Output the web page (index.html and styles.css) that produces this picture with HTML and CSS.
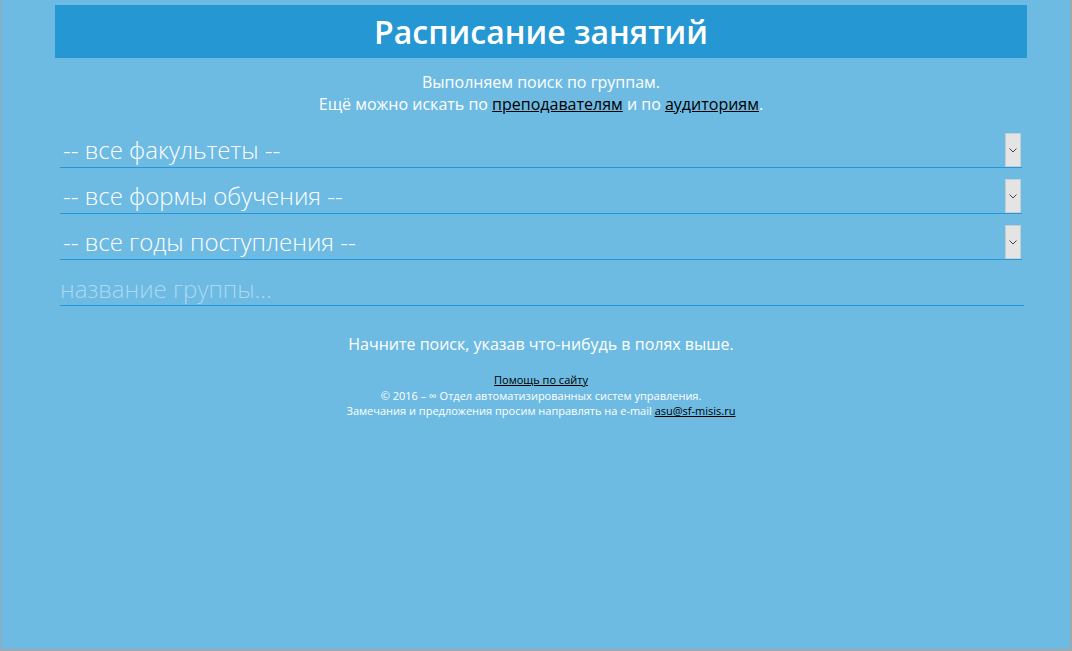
FILE: index.html
```html
<!DOCTYPE html>
<html lang="ru">
<head>
<meta charset="utf-8">
<title>Расписание занятий</title>
<link rel="stylesheet" href="styles.css">
</head>
<body>
<div class="frame">
  <div class="page">
    <header class="header"><h1>Расписание занятий</h1></header>
    <p class="intro">Выполняем поиск по группам.<br>Ещё можно искать по <a href="#">преподавателям</a> и по <a href="#">аудиториям</a>.</p>
    <div class="form">
      <div class="field"><span class="value">-- все факультеты --</span><span class="btn"><svg width="8" height="5" viewBox="0 0 8 5"><path d="M0.5 0.5 L4 4 L7.5 0.5" fill="none" stroke="#444" stroke-width="1"/></svg></span></div>
      <div class="field"><span class="value">-- все формы обучения --</span><span class="btn"><svg width="8" height="5" viewBox="0 0 8 5"><path d="M0.5 0.5 L4 4 L7.5 0.5" fill="none" stroke="#444" stroke-width="1"/></svg></span></div>
      <div class="field"><span class="value">-- все годы поступления --</span><span class="btn"><svg width="8" height="5" viewBox="0 0 8 5"><path d="M0.5 0.5 L4 4 L7.5 0.5" fill="none" stroke="#444" stroke-width="1"/></svg></span></div>
      <div class="field field-input"><span class="placeholder">название группы...</span></div>
    </div>
    <p class="hint">Начните поиск, указав что-нибудь в полях выше.</p>
    <footer class="footer">
      <a href="#">Помощь по сайту</a><br>
      © 2016 – ∞ Отдел автоматизированных систем управления.<br>
      Замечания и предложения просим направлять на e-mail <a href="#">asu@sf-misis.ru</a>
    </footer>
  </div>
</div>
</body>
</html>
```
FILE: styles.css
```css
html, body {
  margin: 0;
  padding: 0;
  height: 100%;
}
body {
  background: #6dbbe3;
  font-family: "Open Sans", "Noto Sans", sans-serif;
  color: #fff;
}
.frame {
  box-sizing: border-box;
  height: 651px;
  border-left: 1px solid #9fa8ae;
  border-right: 2px solid #9fa8ae;
  border-bottom: 2px solid #9fa8ae;
}
.page {
  padding: 5px 43px 0 54px;
}
.header {
  background: #2598d4;
  height: 53px;
  display: flex;
  align-items: center;
  justify-content: center;
}
.header h1 {
  margin: 0;
  font-size: 32px;
  font-weight: 600;
  color: #fff;
  line-height: 1;
  padding-top: 1px;
}
.intro {
  margin: 13px 0 0;
  text-align: center;
  font-size: 16px;
  line-height: 22px;
}
.intro a, .footer a {
  color: #000;
  text-decoration: underline;
}
.form {
  margin: 7px 5px 0 5px;
}
.field {
  display: flex;
  align-items: flex-end;
  justify-content: space-between;
  height: 45px;
  border-bottom: 1px solid #2396dc;
}
.value {
  font-size: 24px;
  font-weight: 300;
  padding-left: 3px;
  line-height: 30px;
  padding-bottom: 2px;
}
.btn {
  box-sizing: border-box;
  width: 16px;
  height: 34px;
  margin-right: 1px;
  background: #e4e4e4;
  border: 1px solid #c8cdd0;
  display: flex;
  align-items: center;
  justify-content: center;
}
.field-input {
  margin-right: -2px;
}
.placeholder {
  font-size: 24px;
  font-weight: 300;
  color: #acd8f1;
  line-height: 30px;
  padding-bottom: 1px;
}
.hint {
  margin: 27px 0 0;
  text-align: center;
  font-size: 16px;
  line-height: 22px;
}
.footer {
  margin-top: 17px;
  text-align: center;
  font-size: 11px;
  line-height: 15.5px;
}
```
